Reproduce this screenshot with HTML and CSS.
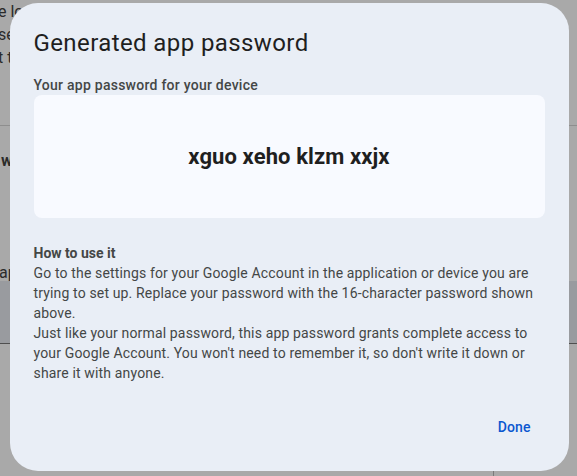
FILE: index.html
```html
<!DOCTYPE html>
<html lang="en">
<head>
<meta charset="utf-8">
<title>Generated app password</title>
<link rel="stylesheet" href="styles.css">
</head>
<body>
<main class="page" aria-hidden="true">
  <div class="intro">
    <p>e lo</p>
    <p>se</p>
    <p>t to</p>
  </div>
  <hr class="rule">
  <p class="heading">w</p>
  <p class="app-row">ap</p>
  <div class="band"></div>
  <div class="footer-col"></div>
</main>

<div class="scrim">
  <div class="dialog" role="dialog" aria-labelledby="dlg-title">
    <h1 class="dialog-title" id="dlg-title">Generated app password</h1>
    <p class="label">Your app password for your device</p>
    <div class="password-box">
      <span class="password">xguo xeho klzm xxjx</span>
    </div>
    <h2 class="howto-title">How to use it</h2>
    <p class="howto-text">Go to the settings for your Google Account in the application or device you are trying to set up. Replace your password with the 16-character password shown above.<br>Just like your normal password, this app password grants complete access to your Google Account. You won't need to remember it, so don't write it down or share it with anyone.</p>
    <div class="actions">
      <button class="text-button" type="button">Done</button>
    </div>
  </div>
</div>
</body>
</html>
```
FILE: styles.css
```css
html, body {
  margin: 0;
  height: 100%;
}

body {
  background: #a9a9a9;
  font-family: Roboto, "Liberation Sans", sans-serif;
  overflow: hidden;
}

/* underlying page, dimmed by the scrim */
.page {
  height: 100%;
  display: flex;
  flex-direction: column;
  color: #2b2b2b;
  font-size: 16px;
}

.page p {
  margin: 0;
}

.intro {
  margin-left: -2px;
  line-height: 23px;
}

.rule {
  margin: 56px 0 0;
  border: 0;
  border-top: 1px solid #8e8e8e;
  width: 100%;
}

.heading {
  margin-top: 23px !important;
  line-height: 24px;
  font-weight: 700;
  padding-left: 1px;
}

.app-row {
  margin-top: 88px !important;
  line-height: 24px;
  margin-left: -1px !important;
}

.band {
  margin-top: -4px;
  height: 62px;
  background: #999b9f;
  border-bottom: 1px solid #4f4f4f;
}

.footer-col {
  flex: 1;
  margin-left: 493px;
  border-left: 1px solid #7a7a7a;
}

/* dialog */
.scrim {
  position: fixed;
  inset: 0;
  display: flex;
  align-items: center;
  justify-content: center;
}

.dialog {
  width: 559px;
  box-sizing: border-box;
  padding: 24px;
  border-radius: 28px;
  background: #e9eef6;
  color: #444746;
  margin-left: 1px;
  margin-top: -2px;
}

.dialog-title {
  margin: 0;
  font-size: 24px;
  line-height: 32px;
  font-weight: 400;
  letter-spacing: 0.4px;
  color: #1f1f1f;
}

.label {
  margin: 16px 0 0;
  font-size: 14px;
  line-height: 20px;
  font-weight: 500;
  letter-spacing: 0.25px;
  color: #444746;
}

.password-box {
  height: 123px;
  display: flex;
  align-items: center;
  justify-content: center;
  background: #f8faff;
  border-radius: 8px;
}

.password {
  font-size: 22px;
  line-height: 29px;
  font-weight: 700;
  color: #1f1f1f;
  letter-spacing: 0.1px;
}

.howto-title {
  margin: 25px 0 0;
  font-size: 14px;
  line-height: 20px;
  font-weight: 700;
  color: #444746;
}

.howto-text {
  margin: 0;
  font-size: 14px;
  line-height: 20px;
  letter-spacing: 0.15px;
}

.actions {
  margin-top: 24px;
  display: flex;
  justify-content: flex-end;
}

.text-button {
  height: 40px;
  padding: 0 14px 0 12px;
  border: 0;
  border-radius: 20px;
  background: transparent;
  color: #0b57d0;
  font-family: inherit;
  font-size: 14px;
  font-weight: 500;
  letter-spacing: 0.1px;
  cursor: pointer;
}
```
